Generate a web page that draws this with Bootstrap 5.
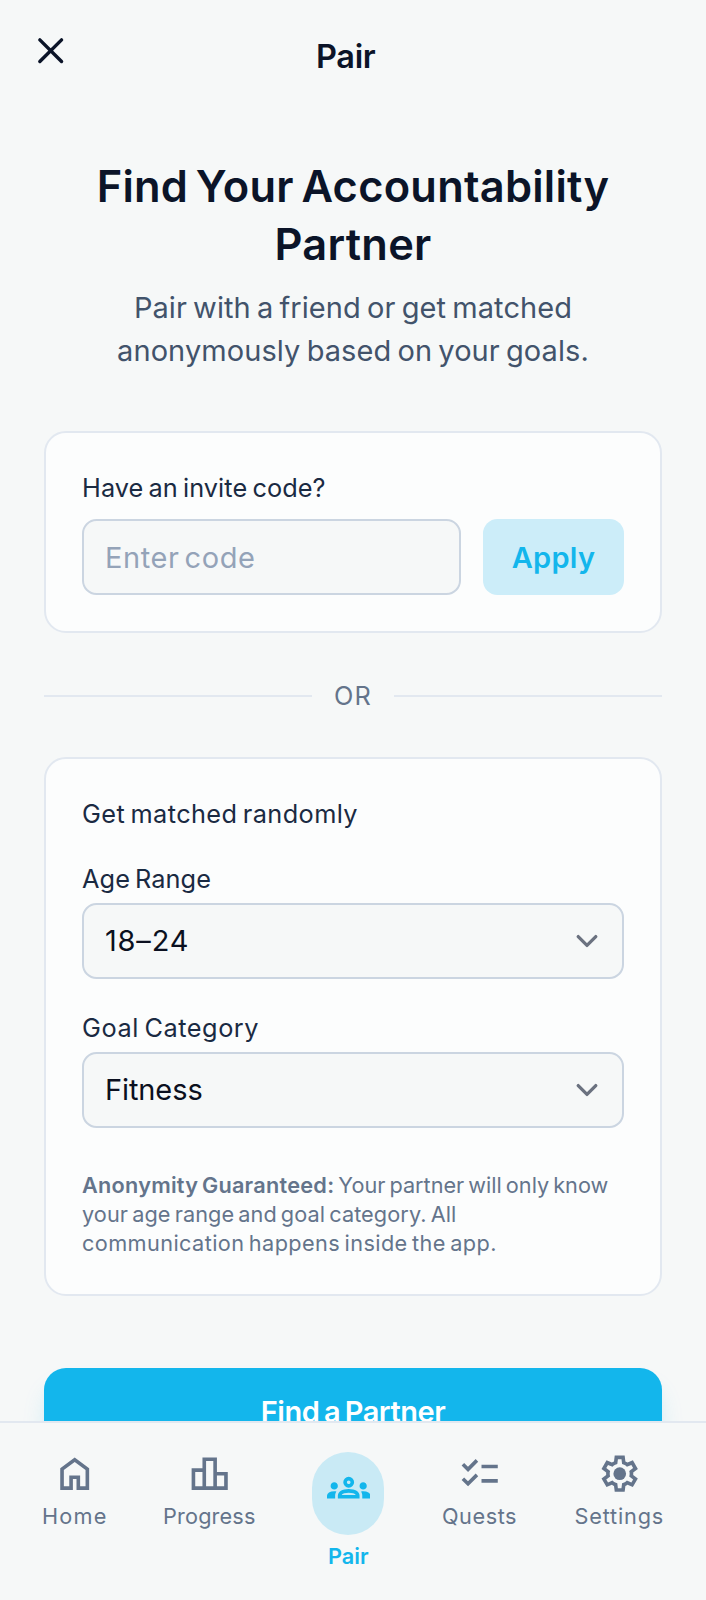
<!DOCTYPE html>
<html lang="en">
<head>
<meta charset="utf-8">
<meta name="viewport" content="width=device-width, initial-scale=1">
<title>Pair</title>
<link href="https://cdn.jsdelivr.net/npm/bootstrap@5.3.0/dist/css/bootstrap.min.css" rel="stylesheet">
<style>
  html, body { height: 100%; overflow: hidden; }
  body { font-family: Inter, "Open Sans", sans-serif; background: #f6f8f8; color: #0b1428; word-spacing: -.13em; }
  svg { display: block; fill: currentColor; }
  .icon { width: 43.4px; height: 43.4px; flex: none; }
  .top-bar { height: 157px; padding: 29px 29px 0; }
  .top-title { font-size: 32.5px; line-height: 56px; font-weight: 600; margin-right: 58px; letter-spacing: -.3px; }
  .page { padding: 0 44px; }
  .headline { font-size: 43.4px; line-height: 58px; font-weight: 600; margin-bottom: 13px; word-spacing: -.08em; letter-spacing: .25px; }
  .intro { font-size: 29px; line-height: 43.4px; color: #42536b; margin-bottom: 58px; }
  .panel { background: #fcfdfd; border: 2px solid #e2e8f0; border-radius: 22px; padding: 37px 36px 36px; }
  .field-label { display: block; font-size: 25.3px; line-height: 36px; color: #1a2a42; white-space: nowrap; }
  .field { height: 76px; font-size: 29px; word-spacing: -.12em; background-color: #f6f8f8; border: 2px solid #cbd5e1; border-radius: 14.5px; padding: 0 21px; color: #0b1020; }
  .code-row { gap: 22px; margin-top: 13.5px; }
  .field::placeholder { color: #94a3b8; opacity: 1; }
  .form-select.field { background-image: url("data:image/svg+xml,%3Csvg xmlns='http://www.w3.org/2000/svg' fill='none' viewBox='0 0 20 20'%3E%3Cpath stroke='%236b7280' stroke-linecap='round' stroke-linejoin='round' stroke-width='1.5' d='M6 8l4 4 4-4'/%3E%3C/svg%3E"); background-size: 43.5px; background-position: right 14px center; }
  .label-age { margin: 29px 0 6px; }
  .label-goal { margin: 31px 0 6px; }
  .btn-apply { flex: none; width: 141px; height: 76px; padding: 0; background: #ccedf9; color: #13b6ec; border: 0; border-radius: 14.5px; font-size: 29px; font-weight: 600; letter-spacing: .3px; }
  .or-row { margin: 44.5px 0 43px; gap: 22px; font-size: 25.3px; line-height: 36px; color: #64748b; }
  .rule { height: 2px; background: #e2e8f0; }
  .note { font-size: 21.7px; line-height: 29px; color: #64748b; white-space: nowrap; margin: 43.5px 0 0; }
  .note strong { font-weight: 600; letter-spacing: .25px; }
  .btn-find { height: 86px; margin-top: 72px; padding: 0; border: 0; border-radius: 22px; background: #13b6ec; color: #fff; font-size: 29px; font-weight: 600; letter-spacing: -.45px; word-spacing: -.08em; box-shadow: 0 18px 27px -5px rgba(19,182,236,.2), 0 7px 11px -7px rgba(19,182,236,.2); }
  .tabs-bar { height: 179px; border-top: 2px solid #e2e8f0; background: #f6f8f8; padding: 28.5px 42px 0; z-index: 10; }
  .tab { gap: 7px; font-size: 21.7px; line-height: 29px; color: #64748b; text-decoration: none; }
  .tab-progress { margin-left: -2px; }
  .tab-current { color: #13b6ec; font-weight: 600; margin-left: -1px; }
  .pill { height: 83px; padding: 14.5px; border-radius: 36.2px; background: #c9eaf5; }
  .t0 { letter-spacing: -.1px } .t1 { letter-spacing: .08px } .t2 { letter-spacing: .15px } .t3 { letter-spacing: .4px } .t4 { letter-spacing: .55px } .t5 { letter-spacing: .8px } .t6 { letter-spacing: 1.2px }
</style>
</head>
<body>
<header class="top-bar d-flex align-items-start">
  <svg class="icon" viewBox="0 0 24 24" role="button" aria-label="Close"><path d="M6 6 18 18M18 6 6 18" fill="none" stroke="currentColor" stroke-width="1.9" stroke-linecap="round"/></svg>
  <div class="top-title flex-grow-1 text-center">Pair</div>
</header>

<main class="page">
  <h1 class="headline text-center">Find Your Accountability<br>Partner</h1>
  <p class="intro text-center"><span class="t1">Pair with a friend or get matched</span><br><span class="t1">anonymously based on your goals.</span></p>

  <section class="panel">
    <label class="field-label t1" for="code">Have an invite code?</label>
    <div class="code-row d-flex">
      <input id="code" class="form-control field t4" type="text" placeholder="Enter code">
      <button class="btn btn-apply" type="button">Apply</button>
    </div>
  </section>

  <div class="or-row d-flex align-items-center"><div class="rule flex-grow-1"></div><span class="t6">OR</span><div class="rule flex-grow-1"></div></div>

  <section class="panel">
    <div class="field-label t3">Get matched randomly</div>
    <label class="field-label label-age t1" for="age">Age Range</label>
    <select id="age" class="form-select field t5"><option>18–24</option></select>
    <label class="field-label label-goal t4" for="goal">Goal Category</label>
    <select id="goal" class="form-select field t0"><option>Fitness</option></select>
    <p class="note"><strong>Anonymity Guaranteed:</strong> <span>Your partner will only know</span><br><span class="t1">your age range and goal category. All</span><br><span class="t3">communication happens inside the app.</span></p>
  </section>

  <button class="btn btn-find w-100" type="button">Find a Partner</button>
</main>

<nav class="tabs-bar fixed-bottom d-flex justify-content-between align-items-start">
  <a class="tab d-flex flex-column align-items-center t6">
    <svg class="icon" viewBox="0 -960 960 960"><path d="M240-200h120v-240h240v240h120v-360L480-740 240-560v360Zm-80 80v-480l320-240 320 240v480H520v-240h-80v240H160Z"/></svg>Home</a>
  <a class="tab tab-progress d-flex flex-column align-items-center t2">
    <svg class="icon" viewBox="0 -960 960 960"><path d="M160-200h160v-320H160v320Zm240 0h160v-560H400v560Zm240 0h160v-240H640v240ZM80-120v-480h240v-240h320v320h240v400H80Z"/></svg>Progress</a>
  <a class="tab tab-current d-flex flex-column align-items-center">
    <span class="pill"><svg class="icon" viewBox="0 -960 960 960"><path d="M0-240v-63q0-43 44-70t116-27q13 0 25 .5t23 2.5q-14 21-21 44t-7 48v65H0Zm240 0v-65q0-32 17.5-58.5T307-410q32-20 76.5-30t96.5-10q53 0 97.5 10t76.5 30q32 20 49 46.5t17 58.5v65H240Zm540 0v-65q0-26-6.5-49T754-397q11-2 22.5-2.5t23.5-.5q72 0 116 26.5t44 70.5v63H780Zm-455-80h311q-10-20-55.5-35T480-370q-55 0-100.5 15T325-320ZM160-440q-33 0-56.5-23.5T80-520q0-34 23.5-57t56.5-23q34 0 57 23t23 57q0 33-23 56.5T160-440Zm640 0q-33 0-56.5-23.5T720-520q0-34 23.5-57t56.5-23q34 0 57 23t23 57q0 33-23 56.5T800-440Zm-320-40q-50 0-85-35t-35-85q0-51 35-85.5t85-34.5q51 0 85.5 34.5T600-600q0 50-34.5 85T480-480Zm0-80q17 0 28.5-11.5T520-600q0-17-11.5-28.5T480-640q-17 0-28.5 11.5T440-600q0 17 11.5 28.5T480-560Z"/></svg></span>Pair</a>
  <a class="tab d-flex flex-column align-items-center t4">
    <svg class="icon" viewBox="0 -960 960 960"><path d="M222-200 80-342l56-56 85 85 170-170 56 57-225 226Zm0-320L80-662l56-56 85 85 170-170 56 57-225 226Zm298 240v-80h360v80H520Zm0-320v-80h360v80H520Z"/></svg>Quests</a>
  <a class="tab d-flex flex-column align-items-center t5">
    <svg class="icon" viewBox="0 -960 960 960"><path d="m370-80-16-128q-13-5-24.500-12T307-235l-119 50L78-375l103-78q-1-7-1-13.500v-27q0-6.500 1-13.500L78-585l110-190 119 50q11-8 23-15t24-12l16-128h220l16 128q13 5 24.500 12t22.500 15l119-50 110 190-103 78q1 7 1 13.500v27q0 6.500-2 13.500l103 78-110 190-118-50q-11 8-23 15t-24 12L590-80H370Zm70-80h79l14-106q31-8 57.500-23.500T639-327l99 41 39-68-86-65q5-14 7-29.500t2-31.500q0-16-2-31.500t-7-29.500l86-65-39-68-99 42q-22-23-48.500-38.500T533-694l-13-106h-79l-14 106q-31 8-57.500 23.500T321-633l-99-41-39 68 86 64q-5 15-7 30t-2 32q0 16 2 31t7 30l-86 65 39 68 99-42q22 23 48.500 38.500T427-266l13 106Z" fill-rule="evenodd"/><circle cx="481" cy="-480" r="140"/></svg>Settings</a>
</nav>
<script src="https://cdn.jsdelivr.net/npm/bootstrap@5.3.0/dist/js/bootstrap.bundle.min.js"></script>
</body>
</html>
